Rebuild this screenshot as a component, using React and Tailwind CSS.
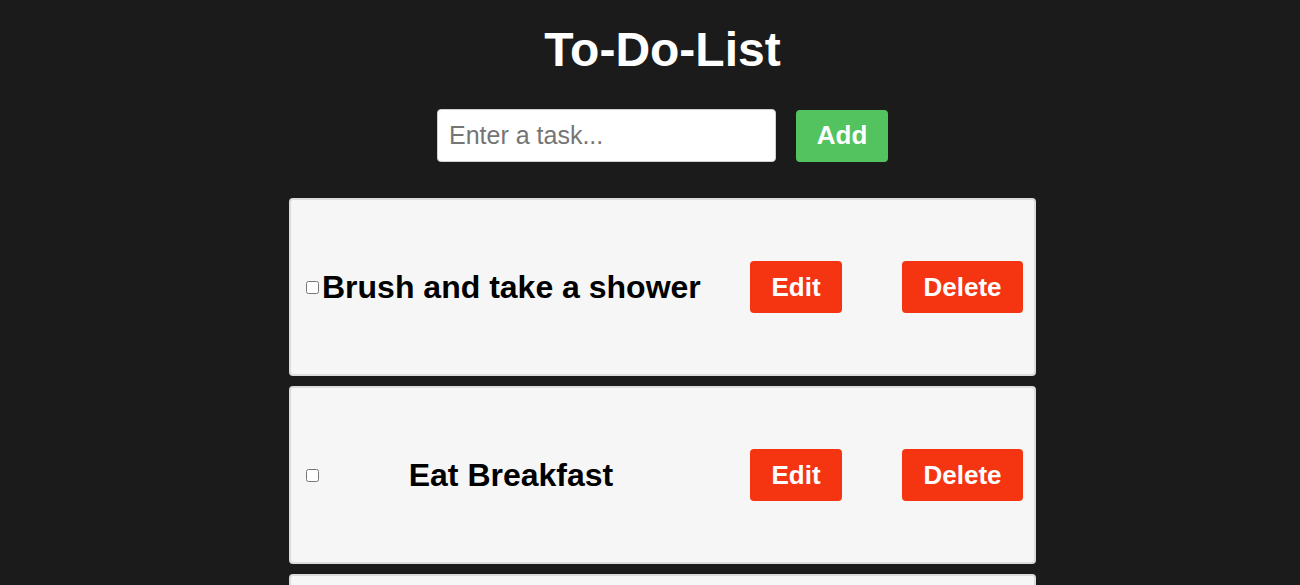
import { useState } from 'react';

const initialTasks = [
    { id: 1, text: 'Brush and take a shower', done: false },
    { id: 2, text: 'Eat Breakfast', done: false },
    { id: 3, text: 'Go to work', done: false },
];

export default function App() {
    const [tasks, setTasks] = useState(initialTasks);
    const [input, setInput] = useState('');

    const addTask = () => {
        if (!input.trim()) return;
        setTasks([...tasks, { id: Date.now(), text: input, done: false }]);
        setInput('');
    };

    return (
        <div className="min-h-screen bg-[#1b1b1b] pl-[25px] font-['Liberation_Sans',Arial,sans-serif]">
            <div className="flex flex-col items-center">
                <h1 className="mt-[22px] text-[48px] leading-[55px] font-bold text-white">To-Do-List</h1>

                <div className="mt-[32px] flex items-center gap-[20px]">
                    <input
                        type="text"
                        value={input}
                        onChange={e => setInput(e.target.value)}
                        placeholder="Enter a task..."
                        className="w-[339px] h-[53px] bg-white border border-[#cfcfcf] rounded-[4px] px-[11px] text-[25px] text-black placeholder:text-[#757575] outline-none"
                    />
                    <button
                        onClick={addTask}
                        className="w-[92px] h-[52px] bg-[#52c35e] rounded-[4px] text-white font-bold text-[26px]"
                    >
                        Add
                    </button>
                </div>

                <ul className="mt-[36px] flex flex-col gap-[10px]">
                    {tasks.map(task => (
                        <li
                            key={task.id}
                            className="w-[747px] h-[178px] bg-[#f6f6f6] border-2 border-[#dcdcdc] rounded-[4px] flex items-center pl-[15px] pr-[11px]"
                        >
                            <input
                                type="checkbox"
                                checked={task.done}
                                onChange={() => setTasks(tasks.map(t => t.id === task.id ? { ...t, done: !t.done } : t))}
                                className="w-[13px] h-[13px] m-0 shrink-0"
                            />
                            <span className="w-[378px] ml-[3px] text-center text-[32px] font-bold text-black whitespace-nowrap">
                                {task.text}
                            </span>
                            <button className="ml-[50px] w-[92px] h-[52px] bg-[#f53412] rounded-[4px] text-white font-bold text-[26px]">
                                Edit
                            </button>
                            <button
                                onClick={() => setTasks(tasks.filter(t => t.id !== task.id))}
                                className="ml-[60px] w-[121px] h-[52px] bg-[#f53412] rounded-[4px] text-white font-bold text-[26px]"
                            >
                                Delete
                            </button>
                        </li>
                    ))}
                </ul>
            </div>
        </div>
    );
}
